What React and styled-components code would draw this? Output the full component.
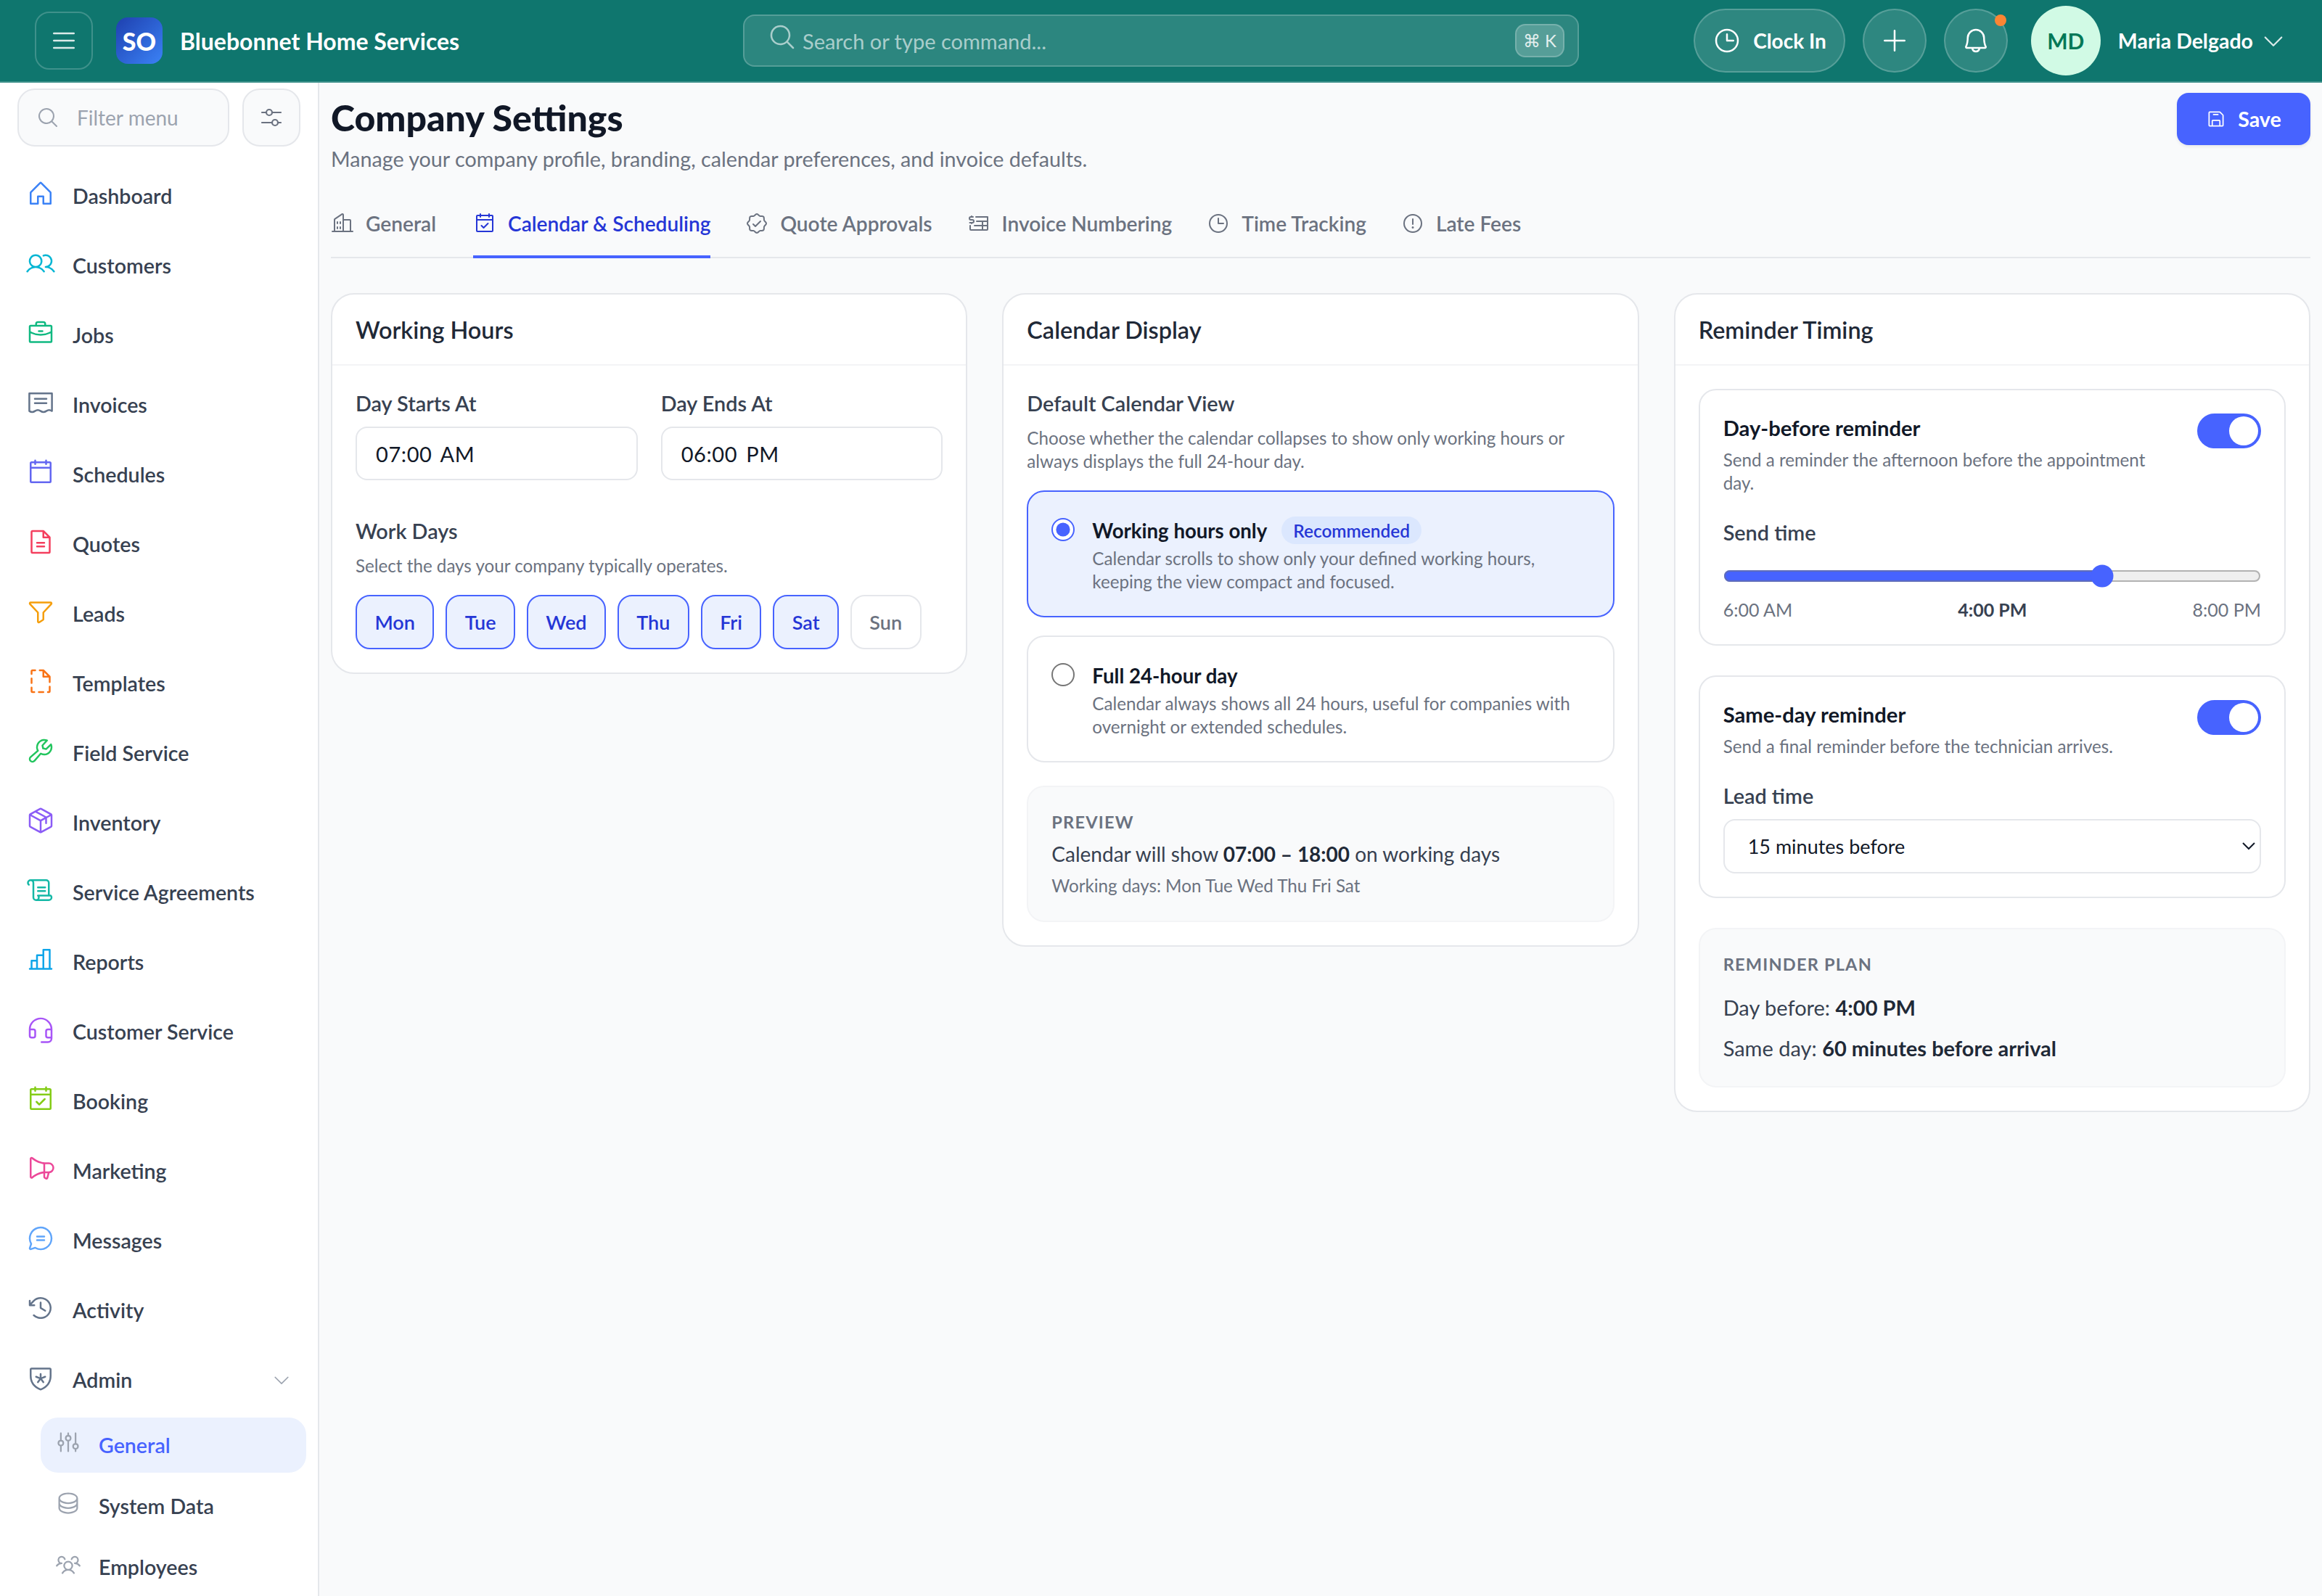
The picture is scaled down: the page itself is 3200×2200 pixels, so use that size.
import styled, { createGlobalStyle } from 'styled-components';
import {
  PiList, PiMagnifyingGlass, PiClock, PiPlus, PiBell, PiCaretDown, PiFloppyDisk,
  PiHouse, PiUsers, PiBriefcase, PiCalendarBlank, PiFileText, PiFunnel, PiFileDashed,
  PiWrench, PiPackage, PiScroll, PiChartBar, PiHeadset, PiCalendarCheck, PiMegaphone,
  PiChatCircleText, PiClockCounterClockwise, PiShieldStar, PiSliders, PiDatabase,
  PiUsersThree, PiBuildings, PiSealCheck, PiInvoice, PiWarningCircle,
} from 'react-icons/pi';

const FONT = '"Lato", "Noto Sans", sans-serif';
const BLUE = '#4763ff';
const BLUE_DARK = '#2536d6';
const BLUE_SOFT = '#ebf1fe';
const LINE = '#e5e7eb';
const INK = '#111827';
const SLATE = '#374151';
const MUTED = '#6b7280';

const GlobalStyle = createGlobalStyle`
  html { zoom: 2; }
  body {
    margin: 0;
    background: #f9fafb;
    font-family: ${FONT};
    color: ${INK};
  }
  * { box-sizing: border-box; }
`;

const Shell = styled.div`
  width: 1600px;
  height: 1100px;
  overflow: hidden;
  display: flex;
  flex-direction: column;
`;

const TopBar = styled.header`
  height: 57px;
  flex: none;
  display: grid;
  grid-template-columns: 1fr 576px 1fr;
  align-items: center;
  padding: 0 24px;
  background: #0f766e;
  border-bottom: 1px solid rgba(255, 255, 255, 0.2);
  color: #fff;
`;

const Brand = styled.div`
  display: flex;
  align-items: center;
`;

const MenuButton = styled.button`
  width: 40px;
  height: 40px;
  display: flex;
  align-items: center;
  justify-content: center;
  padding: 0;
  margin-right: 16px;
  background: transparent;
  border: 1px solid rgba(255, 255, 255, 0.2);
  border-radius: 10px;
  color: rgba(255, 255, 255, 0.85);
  font-size: 20px;
`;

const Logo = styled.div`
  width: 32px;
  height: 32px;
  margin-right: 12px;
  display: flex;
  align-items: center;
  justify-content: center;
  border-radius: 8px;
  background: linear-gradient(135deg, #1e40af, #3b82f6);
  font-size: 17px;
  font-weight: 900;
`;

const BrandName = styled.div`
  font-size: 16px;
  font-weight: 700;
`;

const SearchBar = styled.div`
  height: 36px;
  display: flex;
  align-items: center;
  padding: 0 9px 0 16px;
  background: rgba(255, 255, 255, 0.12);
  border: 1px solid rgba(255, 255, 255, 0.2);
  border-radius: 8px;
  color: rgba(255, 255, 255, 0.6);
  font-size: 14.5px;

  svg {
    font-size: 20px;
    margin-right: 4px;
    margin-top: -5px;
  }
`;

const Kbd = styled.kbd`
  margin-left: auto;
  width: 34px;
  height: 23px;
  display: flex;
  align-items: center;
  justify-content: center;
  background: rgba(255, 255, 255, 0.2);
  border: 1px solid rgba(255, 255, 255, 0.2);
  border-radius: 7px;
  font-family: ${FONT};
  font-size: 12px;
  color: rgba(255, 255, 255, 0.85);
`;

const Actions = styled.div`
  display: flex;
  align-items: center;
  justify-content: flex-end;
  padding-right: 0.5px;
`;

const ClockButton = styled.button`
  height: 44px;
  display: flex;
  align-items: center;
  gap: 8px;
  padding: 0 12px;
  margin-right: 12px;
  background: rgba(255, 255, 255, 0.13);
  border: 1px solid rgba(255, 255, 255, 0.2);
  border-radius: 22px;
  color: #fff;
  font-family: ${FONT};
  font-size: 14px;
  font-weight: 700;

  svg { font-size: 20px; }
`;

const RoundButton = styled.button`
  position: relative;
  width: 44px;
  height: 44px;
  display: flex;
  align-items: center;
  justify-content: center;
  padding: 0;
  margin-right: ${({ $gap }) => $gap}px;
  background: rgba(255, 255, 255, 0.13);
  border: 1px solid rgba(255, 255, 255, 0.2);
  border-radius: 50%;
  color: #fff;
  font-size: 20px;
`;

const Dot = styled.span`
  position: absolute;
  top: 3px;
  right: 0;
  width: 8px;
  height: 8px;
  border-radius: 50%;
  background: #fb8533;
`;

const Avatar = styled.div`
  width: 48px;
  height: 48px;
  margin-right: 12px;
  display: flex;
  align-items: center;
  justify-content: center;
  border-radius: 50%;
  background: #d1fae5;
  color: #047857;
  font-size: 15px;
  font-weight: 700;
`;

const UserName = styled.span`
  font-size: 14.25px;
  font-weight: 700;
  margin-right: 5px;
`;

const UserCaret = styled(PiCaretDown)`
  font-size: 18px;
  color: rgba(255, 255, 255, 0.85);
`;

const Body = styled.div`
  flex: 1;
  min-height: 0;
  display: flex;
`;

const Sidebar = styled.aside`
  width: 220px;
  flex: none;
  background: #fff;
  border-right: 1px solid ${LINE};
  overflow: hidden;
`;

const FilterRow = styled.div`
  display: flex;
  gap: 9px;
  padding: 4px 12px 10px;
`;

const FilterInput = styled.div`
  flex: 1;
  height: 40px;
  display: flex;
  align-items: center;
  gap: 12px;
  padding: 0 12px;
  background: #f9fafb;
  border: 1px solid ${LINE};
  border-radius: 12px;
  color: #9ca3af;
  font-size: 14px;

  svg { font-size: 16px; flex: none; }
`;

const FilterButton = styled.button`
  width: 40px;
  height: 40px;
  flex: none;
  display: flex;
  align-items: center;
  justify-content: center;
  padding: 0;
  background: #f9fafb;
  border: 1px solid ${LINE};
  border-radius: 12px;
  color: ${MUTED};
`;

const NavRow = styled.div`
  height: 48px;
  display: flex;
  align-items: center;
  gap: 12px;
  padding-left: 18px;
  padding-right: 18px;
  color: ${SLATE};
  font-size: 14.3px;
  font-weight: 600;
`;

const NavIcon = styled.span`
  width: 20px;
  height: 20px;
  flex: none;
  display: flex;
  align-items: center;
  justify-content: center;
  margin-top: -3px;
  color: ${({ $color }) => $color};
  font-size: 20px;
`;

const NavCaret = styled(PiCaretDown)`
  margin-left: auto;
  color: #9ca3af;
  font-size: 14px;
`;

const SubList = styled.div`
  display: flex;
  flex-direction: column;
  gap: 4px;
  margin: 2px 8px 0 28px;
`;

const SubRow = styled.div`
  height: 38px;
  display: flex;
  align-items: center;
  gap: 12px;
  padding-left: 10px;
  border-radius: 12px;
  background: ${({ $active }) => ($active ? BLUE_SOFT : 'transparent')};
  color: ${({ $active }) => ($active ? BLUE : SLATE)};
  font-size: 14.3px;
  font-weight: 600;

  svg {
    flex: none;
    width: 18px;
    height: 18px;
    margin-top: -4px;
    color: #9ca3af;
  }
`;

const Main = styled.main`
  flex: 1;
  min-width: 0;
  padding: 8px;
`;

const PageHead = styled.div`
  display: flex;
  justify-content: space-between;
  align-items: flex-start;
`;

const PageTitle = styled.h1`
  margin: 0 0 2.5px;
  font-size: 25px;
  line-height: 32px;
  font-weight: 900;
  color: ${INK};
`;

const PageSub = styled.p`
  margin: 0;
  font-size: 14.35px;
  line-height: 20px;
  color: ${MUTED};
`;

const SaveButton = styled.button`
  width: 92px;
  height: 36px;
  margin-top: -1px;
  display: flex;
  align-items: center;
  justify-content: center;
  gap: 8px;
  background: ${BLUE};
  border: 0;
  border-radius: 8px;
  box-shadow: 0 1px 2px rgba(0, 0, 0, 0.08);
  color: #fff;
  font-family: ${FONT};
  font-size: 14.3px;
  font-weight: 700;

  svg { font-size: 14px; }
`;

const Tabs = styled.nav`
  height: 48px;
  margin-top: 10.5px;
  display: flex;
  gap: 24px;
  border-bottom: 1px solid ${LINE};
`;

const Tab = styled.div`
  height: 48px;
  display: flex;
  align-items: center;
  gap: 8px;
  padding-top: 2px;
  border-bottom: 2px solid ${({ $active }) => ($active ? BLUE : 'transparent')};
  color: ${({ $active }) => ($active ? BLUE_DARK : MUTED)};
  font-size: 14.05px;
  font-weight: 600;

  svg { font-size: 16px; flex: none; }

  &:first-child { margin-right: 1.5px; }
`;

const Columns = styled.div`
  display: grid;
  grid-template-columns: repeat(3, minmax(0, 1fr));
  gap: 24px;
  align-items: start;
  margin-top: 24px;
`;

const Card = styled.section`
  background: #fff;
  border: 1px solid ${LINE};
  border-radius: 16px;
`;

const CardHead = styled.h2`
  margin: 0;
  height: 49px;
  display: flex;
  align-items: center;
  padding: 0 16px;
  border-bottom: 1px solid #f3f4f6;
  font-size: 16.2px;
  font-weight: 600;
  color: #1f2937;
`;

const CardBody = styled.div`
  padding: 16px;
`;

const FieldGrid = styled.div`
  display: grid;
  grid-template-columns: 1fr 1fr;
  gap: 16px;
  margin-bottom: 25px;
`;

const Label = styled.label`
  display: block;
  margin-top: ${({ $top }) => $top || 0}px;
  margin-bottom: 6px;
  font-size: 14.4px;
  line-height: 20px;
  font-weight: 600;
  color: ${SLATE};
`;

const TimeInput = styled.input`
  display: block;
  width: 100%;
  height: 37px;
  padding: 0 13px;
  background: #fff;
  border: 1px solid ${LINE};
  border-radius: 8px;
  font-family: ${FONT};
  font-size: 14.5px;
  letter-spacing: 0.3px;
  word-spacing: 2px;
  color: ${INK};
  outline: none;
`;

const Help = styled.p`
  margin: ${({ $top }) => $top || 0}px 0 ${({ $bottom }) => $bottom || 0}px;
  font-size: 12.1px;
  line-height: 16px;
  color: ${MUTED};
`;

const DayRow = styled.div`
  display: flex;
  gap: 8px;
`;

const DayButton = styled.button`
  height: 37.5px;
  padding: 0 12.2px;
  background: ${({ $on }) => ($on ? BLUE_SOFT : '#fff')};
  border: 1px solid ${({ $on }) => ($on ? BLUE : LINE)};
  border-radius: 10px;
  color: ${({ $on }) => ($on ? BLUE_DARK : MUTED)};
  font-family: ${FONT};
  font-size: 13.5px;
  font-weight: 600;
`;

const Option = styled.label`
  display: flex;
  gap: 12px;
  height: 87.5px;
  padding: 17px 15px 0;
  margin-bottom: 12.5px;
  background: ${({ $on }) => ($on ? BLUE_SOFT : '#fff')};
  border: 1px solid ${({ $on }) => ($on ? BLUE : LINE)};
  border-radius: 12px;
`;

const Radio = styled.input`
  width: 16px;
  height: 16px;
  margin: 1px 0 0 1px;
  flex: none;
  accent-color: ${BLUE};
`;

const OptionTitle = styled.div`
  display: flex;
  align-items: center;
  height: 19px;
  gap: 10px;
  margin-bottom: 2px;
  font-size: 13.8px;
  font-weight: 700;
  color: ${INK};
`;

const Badge = styled.span`
  height: 19px;
  display: inline-flex;
  align-items: center;
  padding: 0 8px;
  border-radius: 10px;
  background: #dbe7fe;
  color: ${BLUE_DARK};
  font-size: 12.2px;
  font-weight: 600;
`;

const Panel = styled.div`
  margin-top: ${({ $top }) => $top}px;
  padding: 16px;
  background: #f9fafb;
  border: 1px solid #f3f4f6;
  border-radius: 12px;
`;

const Overline = styled.div`
  font-size: 11.8px;
  line-height: 16px;
  font-weight: 700;
  letter-spacing: 0.05em;
  text-transform: uppercase;
  color: ${MUTED};
`;

const PanelLine = styled.div`
  margin-top: ${({ $top }) => $top}px;
  font-size: ${({ $size }) => $size}px;
  line-height: 20px;
  color: ${SLATE};

  b { font-weight: 700; color: #1f2937; }
`;

const Reminder = styled.div`
  padding: 16px;
  margin-bottom: 20.5px;
  border: 1px solid ${LINE};
  border-radius: 12px;
`;

const ReminderHead = styled.div`
  display: flex;
  align-items: flex-start;
  gap: 16px;
`;

const ReminderText = styled.div`
  flex: 1;
`;

const ReminderTitle = styled.div`
  font-size: 14.6px;
  line-height: 20px;
  font-weight: 700;
  color: ${INK};
`;

const Toggle = styled.button`
  width: 44px;
  height: 24px;
  flex: none;
  display: flex;
  justify-content: flex-end;
  align-items: center;
  padding: 2px;
  background: ${BLUE};
  border: 0;
  border-radius: 12px;

  &::after {
    content: '';
    width: 20px;
    height: 20px;
    border-radius: 50%;
    background: #fff;
  }
`;

const Range = styled.input`
  display: block;
  width: 100%;
  height: 16px;
  margin: 12px 0 0;
  accent-color: ${BLUE};
`;

const RangeLabels = styled.div`
  display: flex;
  justify-content: space-between;
  margin-top: 7px;
  font-size: 12.5px;
  line-height: 16px;
  color: ${MUTED};

  b { font-weight: 700; color: ${SLATE}; }
`;

const Select = styled.select`
  display: block;
  width: 100%;
  height: 37.5px;
  padding: 0 12px;
  background: #fff;
  border: 1px solid ${LINE};
  border-radius: 8px;
  font-family: ${FONT};
  font-size: 13.5px;
  color: ${INK};
`;

const ReceiptIcon = () => (
  <svg width="20" height="20" viewBox="0 0 20 20" fill="none" stroke="currentColor" strokeWidth="1.25" strokeLinecap="round" strokeLinejoin="round">
    <path d="M2.2 3.6h15.6v12.2c-1.3-.9-2.6-.9-3.9 0-1.3.9-2.6.9-3.9 0-1.3-.9-2.6-.9-3.9 0-1.3.9-2.6.9-3.9 0z" />
    <path d="M6 7.4h8M6 10.4h8" />
  </svg>
);

const FilterIcon = () => (
  <svg width="16" height="16" viewBox="0 0 16 16" fill="none" stroke="currentColor" strokeWidth="1.1" strokeLinecap="round">
    <path d="M1.5 4.5h3M8.5 4.5h6M1.5 11.5h7M12.5 11.5h2" />
    <circle cx="6.5" cy="4.5" r="2" />
    <circle cx="10.5" cy="11.5" r="2" />
  </svg>
);

const NAV = [
  ['Dashboard', PiHouse, '#3b82f6'],
  ['Customers', PiUsers, '#06b6d4'],
  ['Jobs', PiBriefcase, '#10b981'],
  ['Invoices', ReceiptIcon, '#64748b'],
  ['Schedules', PiCalendarBlank, '#6366f1'],
  ['Quotes', PiFileText, '#f43f5e'],
  ['Leads', PiFunnel, '#f59e0b'],
  ['Templates', PiFileDashed, '#f97316'],
  ['Field Service', PiWrench, '#22c55e'],
  ['Inventory', PiPackage, '#8b5cf6'],
  ['Service Agreements', PiScroll, '#14b8a6'],
  ['Reports', PiChartBar, '#0ea5e9'],
  ['Customer Service', PiHeadset, '#a855f7'],
  ['Booking', PiCalendarCheck, '#84cc16'],
  ['Marketing', PiMegaphone, '#ec4899'],
  ['Messages', PiChatCircleText, '#60a5fa'],
  ['Activity', PiClockCounterClockwise, '#64748b'],
];

const TABS = [
  ['General', PiBuildings],
  ['Calendar & Scheduling', PiCalendarCheck, true],
  ['Quote Approvals', PiSealCheck],
  ['Invoice Numbering', PiInvoice],
  ['Time Tracking', PiClock],
  ['Late Fees', PiWarningCircle],
];

const DAYS = ['Mon', 'Tue', 'Wed', 'Thu', 'Fri', 'Sat'];

const App = () => (
  <Shell>
    <GlobalStyle />
    <TopBar>
      <Brand>
        <MenuButton aria-label="Menu"><PiList /></MenuButton>
        <Logo>SO</Logo>
        <BrandName>Bluebonnet Home Services</BrandName>
      </Brand>
      <SearchBar>
        <PiMagnifyingGlass />
        Search or type command...
        <Kbd>⌘ K</Kbd>
      </SearchBar>
      <Actions>
        <ClockButton><PiClock />Clock In</ClockButton>
        <RoundButton $gap={12} aria-label="Add"><PiPlus /></RoundButton>
        <RoundButton $gap={16} aria-label="Notifications"><PiBell /><Dot /></RoundButton>
        <Avatar>MD</Avatar>
        <UserName>Maria Delgado</UserName>
        <UserCaret />
      </Actions>
    </TopBar>

    <Body>
      <Sidebar>
        <FilterRow>
          <FilterInput><PiMagnifyingGlass />Filter menu</FilterInput>
          <FilterButton aria-label="Filter options"><FilterIcon /></FilterButton>
        </FilterRow>
        {NAV.map(([label, Icon, color]) => (
          <NavRow key={label}>
            <NavIcon $color={color}><Icon /></NavIcon>
            {label}
          </NavRow>
        ))}
        <NavRow>
          <NavIcon $color="#64748b"><PiShieldStar /></NavIcon>
          Admin
          <NavCaret />
        </NavRow>
        <SubList>
          <SubRow $active><PiSliders />General</SubRow>
          <SubRow><PiDatabase />System Data</SubRow>
          <SubRow><PiUsersThree />Employees</SubRow>
        </SubList>
      </Sidebar>

      <Main>
        <PageHead>
          <div>
            <PageTitle>Company Settings</PageTitle>
            <PageSub>Manage your company profile, branding, calendar preferences, and invoice defaults.</PageSub>
          </div>
          <SaveButton><PiFloppyDisk />Save</SaveButton>
        </PageHead>

        <Tabs>
          {TABS.map(([label, Icon, active]) => (
            <Tab key={label} $active={active}><Icon />{label}</Tab>
          ))}
        </Tabs>

        <Columns>
          <Card>
            <CardHead>Working Hours</CardHead>
            <CardBody>
              <FieldGrid>
                <div>
                  <Label>Day Starts At</Label>
                  <TimeInput readOnly value="07:00 AM" />
                </div>
                <div>
                  <Label>Day Ends At</Label>
                  <TimeInput readOnly value="06:00 PM" />
                </div>
              </FieldGrid>
              <Label>Work Days</Label>
              <Help $bottom={12}>Select the days your company typically operates.</Help>
              <DayRow>
                {DAYS.map((day) => <DayButton key={day} $on>{day}</DayButton>)}
                <DayButton>Sun</DayButton>
              </DayRow>
            </CardBody>
          </Card>

          <Card>
            <CardHead>Calendar Display</CardHead>
            <CardBody>
              <Label>Default Calendar View</Label>
              <Help $bottom={12}>
                Choose whether the calendar collapses to show only working hours or always displays the full 24-hour day.
              </Help>
              <Option $on>
                <Radio type="radio" name="view" defaultChecked />
                <div>
                  <OptionTitle>Working hours only <Badge>Recommended</Badge></OptionTitle>
                  <Help>Calendar scrolls to show only your defined working hours, keeping the view compact and focused.</Help>
                </div>
              </Option>
              <Option>
                <Radio type="radio" name="view" />
                <div>
                  <OptionTitle>Full 24-hour day</OptionTitle>
                  <Help>Calendar always shows all 24 hours, useful for companies with overnight or extended schedules.</Help>
                </div>
              </Option>
              <Panel $top={16}>
                <Overline>Preview</Overline>
                <PanelLine $top={4} $size={14}>Calendar will show <b>07:00 – 18:00</b> on working days</PanelLine>
                <Help $top={4}>Working days: Mon Tue Wed Thu Fri Sat</Help>
              </Panel>
            </CardBody>
          </Card>

          <Card>
            <CardHead>Reminder Timing</CardHead>
            <CardBody>
              <Reminder>
                <ReminderHead>
                  <ReminderText>
                    <ReminderTitle>Day-before reminder</ReminderTitle>
                    <Help $top={4}>Send a reminder the afternoon before the appointment day.</Help>
                  </ReminderText>
                  <Toggle role="switch" aria-checked="true" aria-label="Day-before reminder" />
                </ReminderHead>
                <Label $top={16}>Send time</Label>
                <Range type="range" min="6" max="20" defaultValue="16" />
                <RangeLabels><span>6:00 AM</span><b>4:00 PM</b><span>8:00 PM</span></RangeLabels>
              </Reminder>
              <Reminder>
                <ReminderHead>
                  <ReminderText>
                    <ReminderTitle>Same-day reminder</ReminderTitle>
                    <Help $top={4}>Send a final reminder before the technician arrives.</Help>
                  </ReminderText>
                  <Toggle role="switch" aria-checked="true" aria-label="Same-day reminder" />
                </ReminderHead>
                <Label $top={16}>Lead time</Label>
                <Select defaultValue="15">
                  <option value="15">15 minutes before</option>
                  <option value="30">30 minutes before</option>
                  <option value="60">60 minutes before</option>
                </Select>
              </Reminder>
              <Panel $top={0}>
                <Overline>Reminder Plan</Overline>
                <PanelLine $top={12} $size={14.5}>Day before: <b>4:00 PM</b></PanelLine>
                <PanelLine $top={8} $size={14.5}>Same day: <b>60 minutes before arrival</b></PanelLine>
              </Panel>
            </CardBody>
          </Card>
        </Columns>
      </Main>
    </Body>
  </Shell>
);

export default App;
